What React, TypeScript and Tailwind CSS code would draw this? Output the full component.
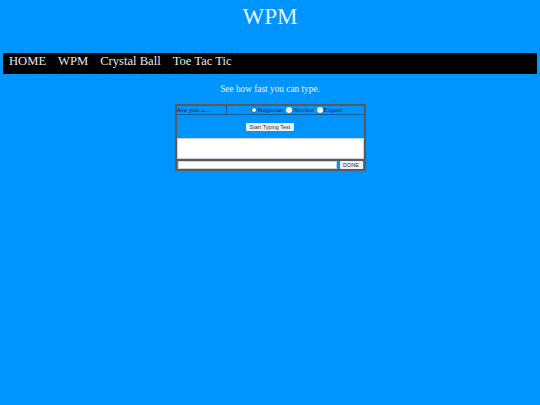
export default function App() {
  const levels = ["Beginner", "Novice", "Expert"];
  return (
    <div className="h-[405px] w-[540px] overflow-hidden bg-[#0094ff] font-['Liberation_Serif',serif]">
      <h1 className="pt-[3px] text-center text-[23px] leading-[27px] text-[#e6f6ff]">WPM</h1>

      <nav className="mx-[3px] mt-[23px] flex h-[21px] gap-3 bg-black pl-[6px] pt-px text-[12.6px] leading-[15px] text-[#e8e8e8]">
        <span>HOME</span>
        <span>WPM</span>
        <span>Crystal Ball</span>
        <span>Toe Tac Tic</span>
      </nav>

      <p className="mt-[10px] text-center text-[9.3px] leading-[11px] text-[#e0f4ff]">See how fast you can type.</p>

      <div className="mx-auto mt-[9px] h-[67px] w-[191px] border-2 border-[#555b60]">
        <div className="flex h-[9px] border-b border-[#1a5a8c] text-[7px] leading-[9px] text-[#00204a]">
          <div className="w-[50px] border-r border-[#1a5a8c]">Are you a....</div>
          <div className="flex flex-1 items-center justify-center gap-[3px] pl-[3px]">
            {levels.map((l, i) => (
              <label key={l} className="flex items-center gap-[1px]">
                <span className={`h-[6px] w-[6px] rounded-full bg-white ${i === 0 ? "border border-[#0060d0]" : ""}`} />
                {l}
              </label>
            ))}
          </div>
        </div>

        <div className="flex h-[23px] items-center justify-center">
          <button className="h-[8px] w-[48px] rounded-[1px] bg-[#efefef] font-['Liberation_Sans',sans-serif] text-[5.5px] leading-[8px] text-[#333333]">
            Start Typing Test
          </button>
        </div>

        <div className="h-[21px] border border-[#c8d4dc] bg-white" />

        <div className="flex h-[10px] items-end border-t-2 border-[#555b60] pl-[1px]">
          <div className="h-[8px] w-[159px] border border-[#c8d4dc] bg-white" />
          <button className="ml-[3px] h-[8px] w-[23px] rounded-[1px] bg-[#efefef] font-['Liberation_Sans',sans-serif] text-[5.5px] font-normal leading-[8px] text-[#333333]">
            DONE
          </button>
        </div>
      </div>
    </div>
  );
}
